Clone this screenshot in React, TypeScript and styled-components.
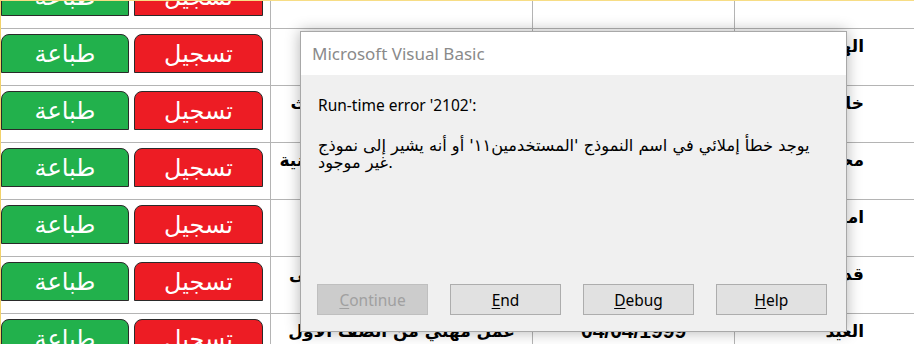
import React from "react";
import styled, { createGlobalStyle } from "styled-components";

const GlobalStyle = createGlobalStyle`
  html, body { margin: 0; padding: 0; background: #ffffff; }
  body { width: 914px; height: 344px; overflow: hidden; }
`;

const Page = styled.div`
  position: relative;
  width: 914px;
  height: 344px;
  overflow: hidden;
  box-sizing: border-box;
  background: #ffffff;
  border-left: 1px solid #f2d26a;
  border-top: 1px solid #f7dd85;
`;

const Sheet = styled.div`
  display: flex;
  flex-direction: column;
  margin-top: -30px;
`;

const Row = styled.div`
  display: grid;
  grid-template-columns: 269px 262px 202px 1fr;
  height: 57px;
  box-sizing: border-box;
  border-top: 1px solid #b4b4b4;
`;

const ButtonCell = styled.div`
  display: flex;
  gap: 5px;
  padding-top: 5px;
  align-items: flex-start;
`;

const ShapeButton = styled.div<{ $color: string }>`
  width: 128px;
  height: 39px;
  box-sizing: border-box;
  border: 1px solid #2a2a2a;
  border-radius: 8px 8px 0 0;
  background: ${(p) => p.$color};
  color: #ffffff;
  display: flex;
  align-items: center;
  justify-content: center;
  font-family: "DejaVu Sans", sans-serif;
  font-size: 24px;
  direction: rtl;
  flex: none;
  & + & { width: 129px; }
`;

const Cell = styled.div<{ $align: "center" | "right" }>`
  border-left: 1px solid #b4b4b4;
  box-sizing: border-box;
  padding: 4px ${(p) => (p.$align === "right" ? "50px" : "0")} 0 0;
  display: flex;
  justify-content: ${(p) => (p.$align === "right" ? "flex-start" : "center")};
  white-space: nowrap;
  line-height: 26px;
  font-size: 17px;
  font-weight: bold;
  color: #000000;
  font-family: "DejaVu Sans", sans-serif;
  direction: rtl;
`;

const DateText = styled.span`
  font-family: "Liberation Sans", Arial, sans-serif;
  font-size: 21px;
  direction: ltr;
`;

const Dialog = styled.div`
  position: absolute;
  left: 299px;
  top: 30px;
  width: 547px;
  height: 301px;
  box-sizing: border-box;
  border: 1px solid #a8a8a8;
  background: #f0f0f0;
  box-shadow: 0 0 14px rgba(0, 0, 0, 0.3);
  display: flex;
  flex-direction: column;
  font-family: "Noto Sans", "Open Sans", sans-serif;
  color: #000000;
`;

const TitleBar = styled.div`
  height: 43px;
  flex: none;
  background: #ffffff;
  display: flex;
  align-items: center;
  padding-left: 11px;
  color: #8a8a8a;
  font-size: 17px;
`;

const Body = styled.div`
  flex: 1;
  padding: 20px 20px 0 17px;
`;

const ErrorTitle = styled.div`
  font-size: 15.5px;
  line-height: 20px;
`;

const Message = styled.div`
  margin-top: 22px;
  font-family: "DejaVu Sans", sans-serif;
  font-size: 16.2px;
  line-height: 17px;
  direction: ltr;
  text-align: left;
  white-space: nowrap;
`;

const ButtonRow = styled.div`
  display: flex;
  gap: 22px;
  padding: 0 0 16px 16px;
`;

const DlgButton = styled.div<{ $disabled?: boolean }>`
  width: 111px;
  height: 31px;
  box-sizing: border-box;
  border: 1px solid ${(p) => (p.$disabled ? "#bfbfbf" : "#adadad")};
  background: ${(p) => (p.$disabled ? "#cccccc" : "#e1e1e1")};
  color: ${(p) => (p.$disabled ? "#a0a0a0" : "#000000")};
  display: flex;
  align-items: center;
  justify-content: center;
  font-size: 15.5px;
  & u { text-underline-offset: 2px; }
`;

type RowData = { note: string; date: string; name: string };

const rows: RowData[] = [
  { note: "", date: "", name: "" },
  { note: "", date: "12/03/1998", name: "الهادي محمد" },
  { note: "عمل فني من الصف الثالث", date: "21/07/1997", name: "خالد أحمد" },
  { note: "عمل مهني في الثانوية الفنية", date: "15/01/1998", name: "محمد علي" },
  { note: "", date: "09/11/1997", name: "امين سعيد" },
  { note: "عمل مهني بالمرحلة الأولى", date: "30/05/1998", name: "قدور عمر" },
  { note: "عمل مهني من الصف الأول", date: "04/04/1999", name: "العيد" },
];

export default function App() {
  return (
    <>
      <GlobalStyle />
      <Page>
        <Sheet>
          {rows.map((r, i) => (
            <Row key={i}>
              <ButtonCell>
                <ShapeButton $color="#22b14c">طباعة</ShapeButton>
                <ShapeButton $color="#ed1c24">تسجيل</ShapeButton>
              </ButtonCell>
              <Cell $align="center">{r.note}</Cell>
              <Cell $align="center">
                <DateText>{r.date}</DateText>
              </Cell>
              <Cell $align="right">{r.name}</Cell>
            </Row>
          ))}
        </Sheet>
        <Dialog>
          <TitleBar>Microsoft Visual Basic</TitleBar>
          <Body>
            <ErrorTitle>Run-time error '2102':</ErrorTitle>
            <Message>
              يوجد خطأ إملائي في اسم النموذج 'المستخدمين١١' أو أنه يشير إلى نموذج
              <br />
              غير موجود.
            </Message>
          </Body>
          <ButtonRow>
            <DlgButton $disabled>
              <span>
                <u>C</u>ontinue
              </span>
            </DlgButton>
            <DlgButton>
              <span>
                <u>E</u>nd
              </span>
            </DlgButton>
            <DlgButton>
              <span>
                <u>D</u>ebug
              </span>
            </DlgButton>
            <DlgButton>
              <span>
                <u>H</u>elp
              </span>
            </DlgButton>
          </ButtonRow>
        </Dialog>
      </Page>
    </>
  );
}
